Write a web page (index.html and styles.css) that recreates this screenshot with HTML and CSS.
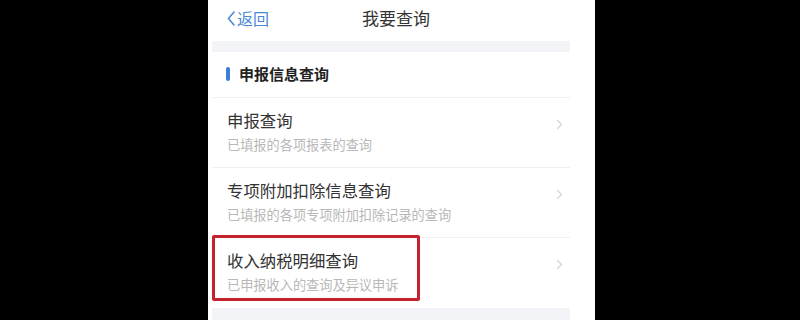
FILE: index.html
```html
<!DOCTYPE html>
<html lang="zh">
<head>
<meta charset="utf-8">
<link rel="stylesheet" href="styles.css">
</head>
<body>
<div class="phone">
  <div class="content">
    <div class="header">
      <div class="back">
        <svg class="back-icon" width="8" height="15" viewBox="0 0 8 15"><polyline points="7,1 1.5,7.5 7,14" fill="none" stroke="#4a88d8" stroke-width="1.6" stroke-linecap="round" stroke-linejoin="round"/></svg>
        <span>返回</span>
      </div>
      <div class="title">我要查询</div>
    </div>
    <div class="band"></div>
    <div class="section">
      <span class="bar"></span>
      <span class="section-title">申报信息查询</span>
    </div>
    <div class="row">
      <div class="texts">
        <div class="row-title">申报查询</div>
        <div class="row-sub">已填报的各项报表的查询</div>
      </div>
      <svg class="chev" width="7" height="11" viewBox="0 0 7 11"><polyline points="1.5,1.5 5.5,5.5 1.5,9.5" fill="none" stroke="#d6d6d6" stroke-width="1.4" stroke-linecap="round" stroke-linejoin="round"/></svg>
    </div>
    <div class="row">
      <div class="texts">
        <div class="row-title">专项附加扣除信息查询</div>
        <div class="row-sub">已填报的各项专项附加扣除记录的查询</div>
      </div>
      <svg class="chev" width="7" height="11" viewBox="0 0 7 11"><polyline points="1.5,1.5 5.5,5.5 1.5,9.5" fill="none" stroke="#d6d6d6" stroke-width="1.4" stroke-linecap="round" stroke-linejoin="round"/></svg>
    </div>
    <div class="row row-last">
      <div class="highlight"></div>
      <div class="texts">
        <div class="row-title">收入纳税明细查询</div>
        <div class="row-sub">已申报收入的查询及异议申诉</div>
      </div>
      <svg class="chev" width="7" height="11" viewBox="0 0 7 11"><polyline points="1.5,1.5 5.5,5.5 1.5,9.5" fill="none" stroke="#d6d6d6" stroke-width="1.4" stroke-linecap="round" stroke-linejoin="round"/></svg>
    </div>
    <div class="band band-bottom"></div>
  </div>
</div>
</body>
</html>
```
FILE: styles.css
```css
html, body {
  margin: 0;
  padding: 0;
  background: #000;
  width: 800px;
  height: 320px;
  overflow: hidden;
  font-family: "Noto Sans CJK SC", "Noto Sans", sans-serif;
}

.phone {
  margin-left: 208px;
  width: 387px;
  height: 320px;
  background: #fff;
  padding-left: 4px;
  box-sizing: border-box;
}

.content {
  width: 358px;
  display: flex;
  flex-direction: column;
}

.header {
  height: 41px;
  display: flex;
  align-items: center;
  padding-left: 15px;
  padding-bottom: 5px;
  box-sizing: border-box;
}

.back {
  display: flex;
  align-items: center;
  gap: 2px;
  color: #4a88d8;
  font-size: 16px;
  line-height: 20px;
}

.title {
  margin-left: 93px;
  font-size: 17px;
  color: #333;
  line-height: 20px;
}

.band {
  height: 11px;
  background: #f3f4f8;
}

.band-bottom {
  height: 13px;
}

.section {
  height: 46px;
  display: flex;
  align-items: center;
  padding-left: 14px;
  border-bottom: 1px solid #efefef;
  box-sizing: border-box;
  padding-bottom: 2px;
}

.bar {
  width: 4px;
  height: 14px;
  border-radius: 2px;
  background: #3a7fd8;
  margin-right: 9px;
}

.section-title {
  font-size: 15px;
  font-weight: 700;
  color: #222;
  line-height: 20px;
}

.row {
  position: relative;
  height: 70px;
  display: flex;
  align-items: flex-start;
  justify-content: space-between;
  padding: 11px 7px 0 15px;
  box-sizing: border-box;
  border-bottom: 1px solid #f0f0f0;
}

.row-last {
  border-bottom: none;
}

.row-title {
  font-size: 16.4px;
  color: #333;
  line-height: 22px;
}

.row-sub {
  margin-top: 5px;
  font-size: 13.2px;
  color: #b8b8b8;
  line-height: 18px;
}

.chev {
  margin-top: 10px;
}

.highlight {
  position: absolute;
  left: 0;
  top: -3px;
  width: 208px;
  height: 66px;
  border: 3px solid #c4232d;
  border-radius: 2px;
  box-sizing: border-box;
}
```
